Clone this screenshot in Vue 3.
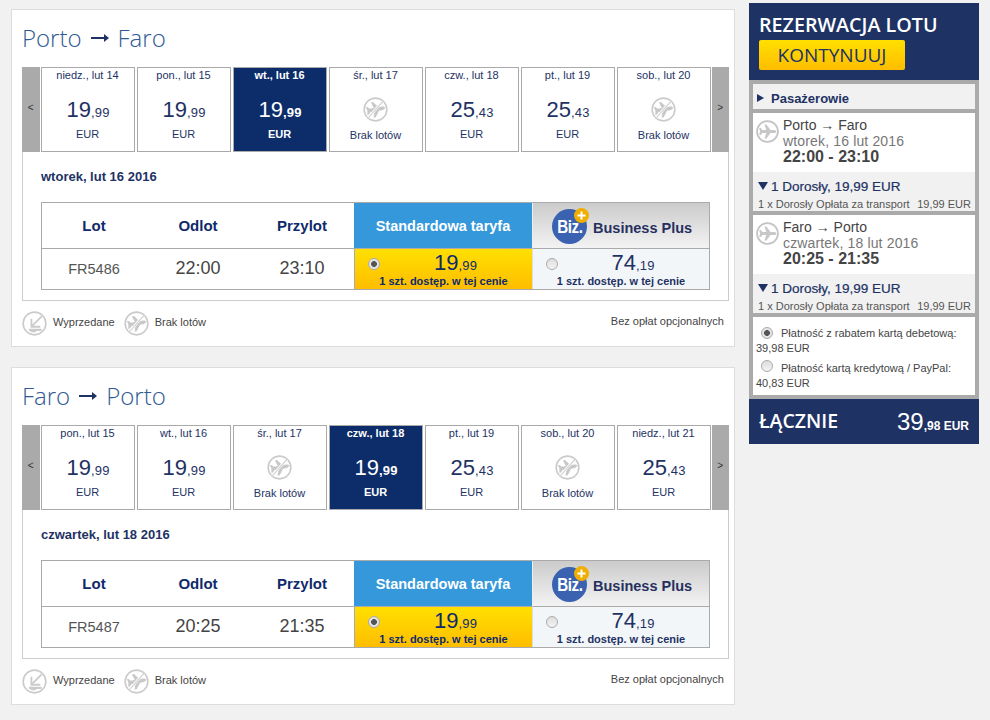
<script setup>
const flights = [
  {
    from: 'Porto', to: 'Faro', date: 'wtorek, lut 16 2016', no: 'FR5486', dep: '22:00', arr: '23:10',
    days: [
      { d: 'niedz., lut 14', p: '19', c: '99' },
      { d: 'pon., lut 15', p: '19', c: '99' },
      { d: 'wt., lut 16', p: '19', c: '99', sel: true },
      { d: 'śr., lut 17' },
      { d: 'czw., lut 18', p: '25', c: '43' },
      { d: 'pt., lut 19', p: '25', c: '43' },
      { d: 'sob., lut 20' }
    ]
  },
  {
    from: 'Faro', to: 'Porto', date: 'czwartek, lut 18 2016', no: 'FR5487', dep: '20:25', arr: '21:35',
    days: [
      { d: 'pon., lut 15', p: '19', c: '99' },
      { d: 'wt., lut 16', p: '19', c: '99' },
      { d: 'śr., lut 17' },
      { d: 'czw., lut 18', p: '19', c: '99', sel: true },
      { d: 'pt., lut 19', p: '25', c: '43' },
      { d: 'sob., lut 20' },
      { d: 'niedz., lut 21', p: '25', c: '43' }
    ]
  }
]
const legs = [
  { route: 'Porto → Faro', date: 'wtorek, 16 lut 2016', time: '22:00 - 23:10' },
  { route: 'Faro → Porto', date: 'czwartek, 18 lut 2016', time: '20:25 - 21:35' }
]
</script>

<template>
  <div class="page">
    <svg class="defs" width="0" height="0" aria-hidden="true">
      <symbol id="plane" viewBox="0 0 26 26">
        <path fill="#c8c8c8" d="M23 13c0-1-1.3-1.8-2.6-1.8h-4L11.8 5H9.6l2 6.2H7.2L5.4 9H3.6l.9 4-.9 4h1.8l1.8-2.2h4.4l-2 6.2h2.2l4.6-6.2h4c1.3 0 2.6-.8 2.6-1.8z" />
      </symbol>
      <symbol id="noflight" viewBox="0 0 26 26">
        <circle cx="13" cy="13" r="11.8" fill="#fff" stroke="#cbcbcb" stroke-width="1.7" />
        <path fill="#c8c8c8" transform="rotate(-10 13 13)" d="M23 13c0-1-1.3-1.8-2.6-1.8h-4L11.8 5H9.6l2 6.2H7.2L5.4 9H3.6l.9 4-.9 4h1.8l1.8-2.2h4.4l-2 6.2h2.2l4.6-6.2h4c1.3 0 2.6-.8 2.6-1.8z" />
        <path d="M20.5 4.5 5.5 21.5" stroke="#fff" stroke-width="2.6" />
        <path d="M21 4.2 5.6 21.6" stroke="#cbcbcb" stroke-width="1.1" />
      </symbol>
      <symbol id="seat" viewBox="0 0 26 26">
        <circle cx="13" cy="13" r="11.8" fill="#fff" stroke="#cbcbcb" stroke-width="1.7" />
        <path d="M20.5 5.5 10.5 15.5" fill="none" stroke="#cbcbcb" stroke-width="1.9" />
        <path d="M9.8 8v8.4H19" fill="none" stroke="#cbcbcb" stroke-width="1.9" />
        <path d="M7.2 18.4h13.2v2.4H15l-1 1.4H9.5l-.6-1.4H7.2z" fill="#cbcbcb" />
      </symbol>
    </svg>

    <main class="main">
      <section v-for="f in flights" :key="f.no" class="card">
        <h2 class="title">{{ f.from }}<svg class="arrow" width="18" height="8" viewBox="0 0 18 8"><path d="M0 3h13V0l5 4-5 4V5H0z" fill="#1e3264" /></svg>{{ f.to }}</h2>
        <div class="strip">
          <div class="nav">&lt;</div>
          <div v-for="day in f.days" :key="day.d" class="tab" :class="{ sel: day.sel }">
            <div class="tab-date">{{ day.d }}</div>
            <template v-if="day.p">
              <div class="tab-price"><span class="big">{{ day.p }}</span><span class="cents">,{{ day.c }}</span></div>
              <div class="tab-cur">EUR</div>
            </template>
            <template v-else>
              <svg class="tab-icon" width="25" height="25"><use href="#noflight" /></svg>
              <div class="tab-none">Brak lotów</div>
            </template>
          </div>
          <div class="nav">&gt;</div>
        </div>
        <div class="detail">
          <div class="detail-date">{{ f.date }}</div>
          <div class="table">
            <div class="th">Lot</div>
            <div class="th">Odlot</div>
            <div class="th">Przylot</div>
            <div class="th std">Standardowa taryfa</div>
            <div class="th biz">
              <span class="logo">
                <span class="logo-text">Biz.</span>
                <svg class="logo-plus" width="15" height="15" viewBox="0 0 15 15">
                  <circle cx="7.5" cy="7.5" r="7.5" fill="#f0ae00" />
                  <path d="M7.5 3.5v8M3.5 7.5h8" stroke="#fff" stroke-width="2" />
                </svg>
              </span>
              <span class="biz-name">Business Plus</span>
            </div>
            <div class="td no">{{ f.no }}</div>
            <div class="td time">{{ f.dep }}</div>
            <div class="td time">{{ f.arr }}</div>
            <div class="fare yellow">
              <span class="radio on"></span>
              <div class="fare-price"><span class="big">19</span><span class="cents">,99</span></div>
              <div class="fare-note">1 szt. dostęp. w tej cenie</div>
            </div>
            <div class="fare pale">
              <span class="radio"></span>
              <div class="fare-price"><span class="big">74</span><span class="cents">,19</span></div>
              <div class="fare-note">1 szt. dostęp. w tej cenie</div>
            </div>
          </div>
        </div>
        <div class="legend">
          <svg width="25" height="25"><use href="#seat" /></svg>
          <span class="legend-text">Wyprzedane</span>
          <svg width="25" height="25"><use href="#noflight" /></svg>
          <span class="legend-text">Brak lotów</span>
          <span class="legend-right">Bez opłat opcjonalnych</span>
        </div>
      </section>
    </main>

    <aside class="side">
      <header class="side-head">
        <div class="side-title">REZERWACJA LOTU</div>
        <div class="cta">KONTYNUUJ</div>
      </header>
      <div class="side-body">
        <div class="pax"><span class="tri-right"></span>Pasażerowie</div>
        <div v-for="l in legs" :key="l.route" class="leg">
          <div class="leg-top">
            <svg class="leg-icon" width="23" height="23" viewBox="0 0 26 26">
              <circle cx="13" cy="13" r="11.8" fill="#fff" stroke="#c4c4c4" stroke-width="2" />
              <use href="#plane" width="26" height="26" />
            </svg>
            <div>
              <div class="leg-route">{{ l.route }}</div>
              <div class="leg-date">{{ l.date }}</div>
              <div class="leg-time">{{ l.time }}</div>
            </div>
          </div>
          <div class="leg-bottom">
            <div class="leg-sum"><span class="tri-down"></span>1 Dorosły, 19,99 EUR</div>
            <div class="leg-line"><span>1 x Dorosły Opłata za transport</span><span>19,99 EUR</span></div>
          </div>
        </div>
        <div class="pay">
          <div class="pay-row"><span class="radio small on"></span><span>Płatność z rabatem kartą debetową:</span></div>
          <div class="pay-amt">39,98 EUR</div>
          <div class="pay-row second"><span class="radio small"></span><span>Płatność kartą kredytową / PayPal:</span></div>
          <div class="pay-amt">40,83 EUR</div>
        </div>
      </div>
      <footer class="total">
        <span class="total-label">ŁĄCZNIE</span>
        <span class="total-val"><span class="total-big">39</span>,98 EUR</span>
      </footer>
    </aside>
  </div>
</template>

<style>
html, body { background: #f1f1f1; margin: 0; }
</style>

<style scoped>
.page {
  display: flex;
  align-items: flex-start;
  padding: 3px 0 0 11px;
  min-height: 717px;
  font-family: "Liberation Sans", Arial, sans-serif;
  color: #1e3264;
}
.defs { position: absolute; }
.main { width: 724px; margin-top: 6px; }
.card {
  box-sizing: border-box;
  height: 338px;
  margin-bottom: 20px;
  background: #fff;
  border: 1px solid #ddd;
  padding: 0 5px 0 10px;
}
.title {
  box-sizing: border-box;
  margin: 0;
  height: 57px;
  padding-bottom: 2px;
  display: flex;
  align-items: center;
  font-family: "Open Sans", sans-serif;
  font-weight: 300;
  font-size: 24px;
  color: #2f5a94;
  white-space: nowrap;
}
.arrow { margin: 0 9px; flex: none; }
.strip { display: flex; height: 85px; }
.nav {
  width: 17.5px;
  flex: none;
  background: #aaa;
  font-size: 10px;
  line-height: 81px;
  text-align: center;
  color: #333;
  margin-right: 1px;
}
.nav:last-child { margin-right: 0; margin-left: 1px; }
.tab {
  box-sizing: border-box;
  width: 94px;
  flex: none;
  margin-right: 2px;
  border: 1px solid #aaa;
  text-align: center;
  font-size: 11px;
  background: #fff;
}
.tab:nth-last-child(2) { margin-right: 0; }
.tab.sel { background: #0c2d69; color: #fff; }
.tab.sel .tab-date, .tab.sel .tab-cur, .tab.sel .cents { font-weight: 700; }
.tab-date { height: 14px; line-height: 14px; }
.tab-price { margin-top: 15px; height: 26px; line-height: 26px; padding-left: 1px; }
.big { font-size: 22px; }
.cents { font-size: 13px; letter-spacing: .2px; }
.tab-cur { margin-top: 4px; height: 14px; line-height: 14px; }
.tab-icon { display: block; margin: 15px auto 0; }
.tab-none { margin-top: 6px; height: 14px; line-height: 14px; }
.detail {
  box-sizing: border-box;
  height: 149px;
  border: 1px solid #ccc;
  border-top: 0;
  padding: 16px 0 0 18px;
}
.detail-date { height: 16px; line-height: 17px; font-size: 13px; font-weight: 700; margin-bottom: 18px; }
.table {
  box-sizing: border-box;
  width: 669px;
  display: grid;
  grid-template-columns: 104px 104px 104px 178px 177px;
  grid-template-rows: 46px 40px;
  border: 1px solid #aaa;
  background: #fff;
}
.th {
  display: flex;
  align-items: center;
  justify-content: center;
  font-weight: 700;
  font-size: 15px;
  color: #0e2a6b;
  border-bottom: 1px solid #aaa;
}
.th.std { background: #3498db; color: #fff; font-size: 14.5px; }
.th.biz {
  background: linear-gradient(#cbcbcb, #f3f3f3);
  border-left: 1px solid #eee;
  justify-content: flex-start;
  padding-left: 19px;
  box-sizing: border-box;
}
.logo {
  position: relative;
  display: flex;
  align-items: center;
  justify-content: center;
  width: 35px;
  height: 35px;
  border-radius: 50%;
  background: #3a62b0;
  margin-top: 2px;
}
.logo-text { color: #fff; font-size: 19px; font-weight: 700; transform: scaleX(.8); letter-spacing: -.5px; margin-top: 1px; }
.logo-plus { position: absolute; top: -1px; right: -2px; }
.biz-name { margin-left: 6px; margin-top: 5px; font-size: 14.5px; color: #26305f; }
.td { display: flex; align-items: center; justify-content: center; color: #555; }
.td.no { font-size: 14.5px; padding-bottom: 1px; }
.td.time { font-size: 18px; color: #444; padding-bottom: 1px; }
.fare { position: relative; text-align: center; border-left: 1px solid #aaa; box-sizing: border-box; }
.fare.yellow { background: linear-gradient(#ffe000, #ffbd00); color: #0e2a6b; }
.fare.pale { background: #f3f6f8; border-left-color: #ddd; color: #1e3264; }
.fare-price { height: 26px; line-height: 27px; padding-left: 24px; }
.fare-note { font-size: 11px; font-weight: 700; line-height: 13px; }
.radio {
  position: absolute;
  left: 13px;
  top: 9px;
  box-sizing: border-box;
  width: 12px;
  height: 12px;
  border-radius: 50%;
  border: 1px solid #aaa;
  background: linear-gradient(#ddd, #f4f4f4);
}
.radio.on { background: radial-gradient(circle, #555 0 2.6px, #e4e4e4 3.2px); }
.legend { display: flex; align-items: center; height: 44px; padding-right: 5px; font-size: 11px; color: #444; }
.legend svg { flex: none; margin-top: 1px; }
.legend-text { margin: -2px 9px 0 6px; }
.legend-right { margin-left: auto; margin-top: -4px; }
.side { width: 230px; margin-left: 14px; flex: none; }
.side-head { box-sizing: border-box; height: 77px; background: #1e3264; padding: 0 10px; color: #fff; font-family: "Open Sans", sans-serif; }
.side-title { height: 37px; line-height: 44px; font-size: 19.7px; font-weight: 600; white-space: nowrap; }
.cta {
  width: 146px;
  height: 30px;
  line-height: 30px;
  text-align: center;
  border-radius: 2px;
  background: linear-gradient(#ffe000, #ffbd00);
  color: #1e3264;
  font-size: 19px;
}
.side-body { background: #aaa; padding: 4px; display: flex; flex-direction: column; gap: 4px; height: 311px; }
.pax { box-sizing: border-box; display: flex; align-items: center; height: 25px; background: #f1f1f1; font-size: 13px; font-weight: 700; padding: 3px 0 0 4px; }
.tri-right { width: 0; height: 0; border-left: 7px solid #1e3264; border-top: 4.5px solid transparent; border-bottom: 4.5px solid transparent; margin-right: 7px; }
.leg { height: 98px; background: #f1f1f1; }
.leg-top { box-sizing: border-box; height: 59px; background: #fff; display: flex; padding: 4px 0 0 3px; color: #444; }
.leg-icon { flex: none; margin: 3px 4px 0 0; }
.leg-route, .leg-date, .leg-time { height: 16px; line-height: 16px; font-size: 14px; white-space: nowrap; }
.leg-route { color: #444; }
.leg-date { color: #777; letter-spacing: .15px; }
.leg-time { font-size: 16px; font-weight: 700; color: #444; }
.leg-bottom { padding: 6px 4px 0 5px; }
.leg-sum { display: flex; align-items: center; height: 16px; font-size: 13.5px; font-weight: 400; -webkit-text-stroke: .2px #1e3264; white-space: nowrap; }
.tri-down { width: 0; height: 0; border-top: 8px solid #1e3264; border-left: 5px solid transparent; border-right: 5px solid transparent; margin-right: 3px; }
.leg-line { display: flex; justify-content: space-between; margin-top: 3px; height: 14px; line-height: 14px; font-size: 11px; color: #555; white-space: nowrap; }
.pay { height: 78px; background: #fff; padding: 8px 0 0 3px; box-sizing: border-box; font-size: 11px; color: #444; }
.pay-row { position: relative; height: 15px; line-height: 16px; padding-left: 25px; white-space: nowrap; }
.pay-row.second { margin-top: 4px; }
.pay-amt { height: 15px; line-height: 15px; font-size: 11px; margin-top: 1px; }
.radio.small { left: 5px; top: 2px; }
.second .radio.small { top: 0; }
.total {
  box-sizing: border-box;
  height: 45px;
  background: #1e3264;
  color: #fff;
  display: flex;
  justify-content: space-between;
  align-items: center;
  padding: 0 10px;
}
.total-label { font-family: "Open Sans", sans-serif; font-weight: 600; font-size: 19.5px; margin-top: -2px; }
.total-val { font-size: 12px; font-weight: 700; }
.total-big { font-size: 24px; font-weight: 400; }
</style>
